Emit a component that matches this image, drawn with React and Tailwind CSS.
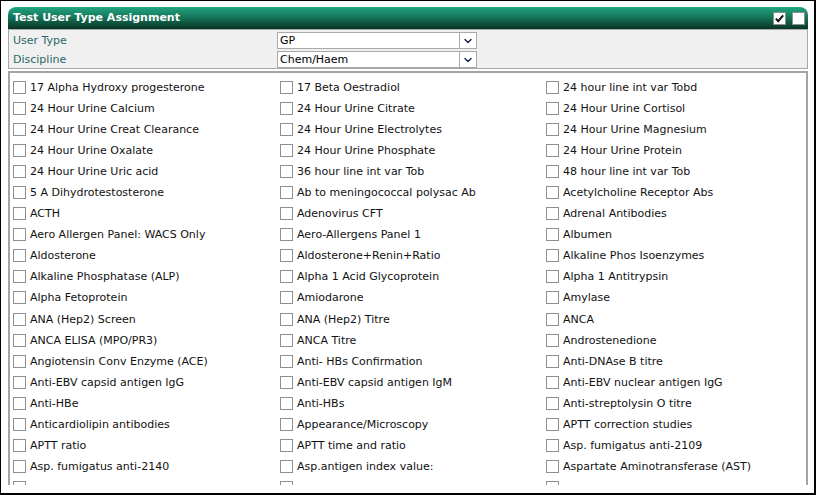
import { ChevronDown } from 'lucide-react'

const tests = [
  '17 Alpha Hydroxy progesterone', '17 Beta Oestradiol', '24 hour line int var Tobd',
  '24 Hour Urine Calcium', '24 Hour Urine Citrate', '24 Hour Urine Cortisol',
  '24 Hour Urine Creat Clearance', '24 Hour Urine Electrolytes', '24 Hour Urine Magnesium',
  '24 Hour Urine Oxalate', '24 Hour Urine Phosphate', '24 Hour Urine Protein',
  '24 Hour Urine Uric acid', '36 hour line int var Tob', '48 hour line int var Tob',
  '5 A Dihydrotestosterone', 'Ab to meningococcal polysac Ab', 'Acetylcholine Receptor Abs',
  'ACTH', 'Adenovirus CFT', 'Adrenal Antibodies',
  'Aero Allergen Panel: WACS Only', 'Aero-Allergens Panel 1', 'Albumen',
  'Aldosterone', 'Aldosterone+Renin+Ratio', 'Alkaline Phos Isoenzymes',
  'Alkaline Phosphatase (ALP)', 'Alpha 1 Acid Glycoprotein', 'Alpha 1 Antitrypsin',
  'Alpha Fetoprotein', 'Amiodarone', 'Amylase',
  'ANA (Hep2) Screen', 'ANA (Hep2) Titre', 'ANCA',
  'ANCA ELISA (MPO/PR3)', 'ANCA Titre', 'Androstenedione',
  'Angiotensin Conv Enzyme (ACE)', 'Anti- HBs Confirmation', 'Anti-DNAse B titre',
  'Anti-EBV capsid antigen IgG', 'Anti-EBV capsid antigen IgM', 'Anti-EBV nuclear antigen IgG',
  'Anti-HBe', 'Anti-HBs', 'Anti-streptolysin O titre',
  'Anticardiolipin antibodies', 'Appearance/Microscopy', 'APTT correction studies',
  'APTT ratio', 'APTT time and ratio', 'Asp. fumigatus anti-2109',
  'Asp. fumigatus anti-2140', 'Asp.antigen index value:', 'Aspartate Aminotransferase (AST)',
]

// next row is scrolled just out of view, only the box tops show
const hiddenRow = 3

function Box({ checked }) {
  return (
    <span className="flex h-[13px] w-[13px] shrink-0 items-center justify-center border border-[#8f8f8f] bg-white">
      {checked && (
        <svg viewBox="0 0 12 12" className="h-[11px] w-[11px]">
          <path d="M2 6.2 L4.6 9 L10 2.6" fill="none" stroke="#111" strokeWidth="2.2" />
        </svg>
      )}
    </span>
  )
}

function Select({ value }) {
  return (
    <div className="flex h-[17px] w-[200px] items-center border border-[#a9a9a9] bg-white">
      <span className="flex-1 pl-[2px] text-[11px] leading-none text-black">{value}</span>
      <span className="flex h-[15px] w-[17px] items-center justify-center border-l border-[#a9a9a9] bg-white">
        <ChevronDown className="h-[12px] w-[12px] text-[#1d2a55]" strokeWidth={3} />
      </span>
    </div>
  )
}

export default function App() {
  return (
    <div className="h-[495px] w-[816px] overflow-hidden border-t border-l border-r-2 border-b-2 border-black bg-white pt-[6px] pl-[7px] pr-[6px]" style={{ fontFamily: '"DejaVu Sans", Verdana, sans-serif' }}>
      {/* Header */}
      <div className="flex h-[22px] items-center justify-between rounded-t-[8px] bg-gradient-to-b from-[#22a682] via-[#137257] to-[#093425] pl-[5px] pr-[3px]">
        <span className="text-[11px] font-bold text-white">Test User Type Assignment</span>
        <div className="flex gap-[6px]">
          <Box checked />
          <Box />
        </div>
      </div>

      {/* Filters */}
      <div className="flex h-[40px] flex-col gap-[2px] border border-[#a8a8a8] bg-[#f0f0f0] pt-[2px] pl-[4px]">
        <div className="flex items-center">
          <span className="w-[264px] text-[11px] leading-[17px] text-[#2c6868]">User Type</span>
          <Select value="GP" />
        </div>
        <div className="flex items-center">
          <span className="w-[264px] text-[11px] leading-[17px] text-[#2c6868]">Discipline</span>
          <Select value="Chem/Haem" />
        </div>
      </div>

      {/* Test list */}
      <div className="mt-[2px] h-[414px] overflow-hidden border-x-2 border-t-2 border-[#a4a4a4] pt-[8px] pl-[3px]">
        <div className="grid grid-cols-[267px_266px_1fr]">
          {tests.map(t => (
            <label key={t} className="flex h-[21.05px] items-start gap-[4px]">
              <Box />
              <span className="text-[11px] leading-[13px] text-[#111]">{t}</span>
            </label>
          ))}
          {Array.from({ length: hiddenRow }, (_, i) => (
            <div key={i} className="flex h-[21px] items-start">
              <Box />
            </div>
          ))}
        </div>
      </div>
    </div>
  )
}
